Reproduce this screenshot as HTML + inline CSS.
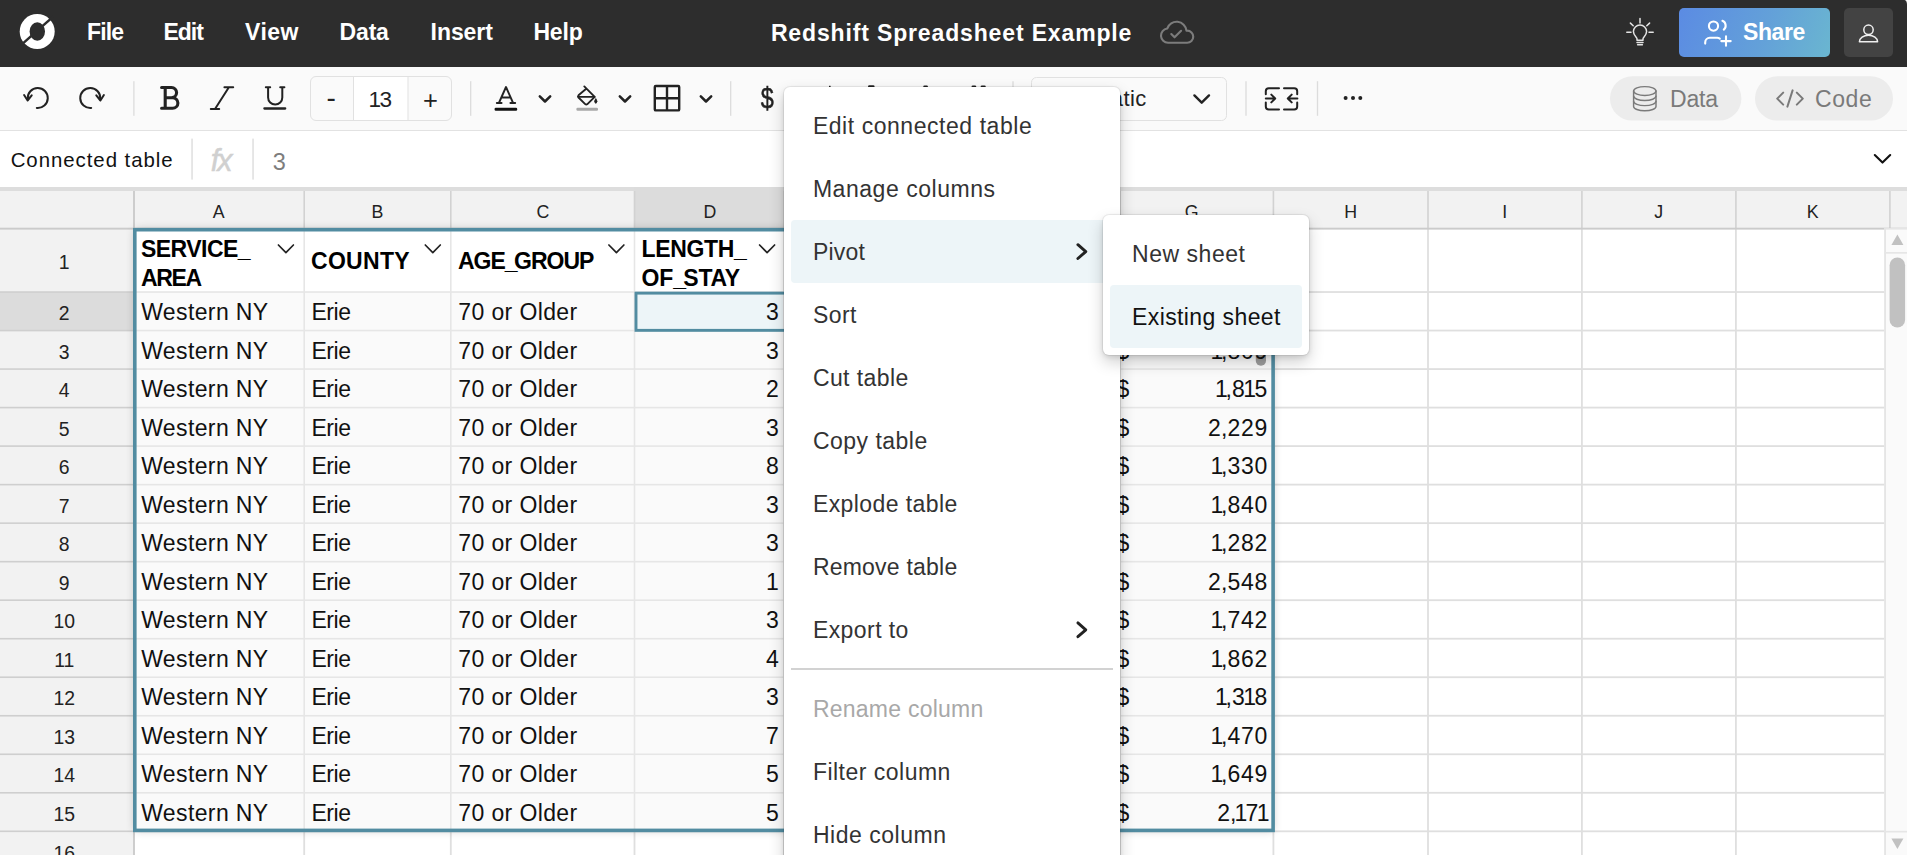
<!DOCTYPE html><html lang="en"><head><meta charset="utf-8"><title>Redshift Spreadsheet Example</title><style>
*{box-sizing:border-box;margin:0;padding:0}
html,body{width:1907px;height:855px;overflow:hidden;background:#fff}
body{font-family:"Liberation Sans",sans-serif;position:relative;-webkit-font-smoothing:antialiased}
.t{position:absolute;white-space:nowrap}
.abs{position:absolute}
svg{position:absolute;left:0;top:0;overflow:visible}
</style></head><body>
<div class="abs" style="left:0;top:0;width:1907px;height:67px;background:#2d2d2d"></div>
<svg width="1907" height="67" viewBox="0 0 1907 67">
<g>
<circle cx="37.2" cy="31.5" r="17.5" fill="#fff"/>
<ellipse cx="37.3" cy="31.5" rx="7.7" ry="9.3" fill="#2d2d2d"/>
<path d="M20.95 45.1 L53.45 16.4" stroke="#2d2d2d" stroke-width="2.5" fill="none"/>
</g>
</svg>
<div class="t" style="top:17px;font-size:23px;line-height:30px;color:#fff;letter-spacing:-0.874px;font-weight:700;left:87.00px;">File</div>
<div class="t" style="top:17px;font-size:23px;line-height:30px;color:#fff;letter-spacing:-0.980px;font-weight:700;left:163.40px;">Edit</div>
<div class="t" style="top:17px;font-size:23px;line-height:30px;color:#fff;letter-spacing:0.501px;font-weight:700;left:245.00px;">View</div>
<div class="t" style="top:17px;font-size:23px;line-height:30px;color:#fff;letter-spacing:-0.184px;font-weight:700;left:339.60px;">Data</div>
<div class="t" style="top:17px;font-size:23px;line-height:30px;color:#fff;letter-spacing:-0.067px;font-weight:700;left:430.60px;">Insert</div>
<div class="t" style="top:17px;font-size:23px;line-height:30px;color:#fff;letter-spacing:-0.147px;font-weight:700;left:533.40px;">Help</div>
<div class="t" style="top:18px;font-size:23px;line-height:30px;color:#fff;letter-spacing:0.854px;font-weight:700;left:770.90px;">Redshift Spreadsheet Example</div>
<svg width="1907" height="67" viewBox="0 0 1907 67"><g transform="translate(1158.8,15) scale(1.42)" fill="none" stroke="#7c7c7c" stroke-width="1.5" stroke-linecap="round" stroke-linejoin="round">
<path d="M6.5 19.5 a5 5 0 0 1 -0.6 -9.96 a7 7 0 0 1 13.6 1.46 h0.5 a4.25 4.25 0 0 1 0 8.5 Z"/>
<path d="M8.8 13.4 l2.3 2.3 l4.6 -4.6"/></g></svg>
<svg width="1907" height="67" viewBox="0 0 1907 67"><g fill="none" stroke="#e4e4e4" stroke-width="1.5" stroke-linecap="round" stroke-linejoin="round">
<path d="M1637 40.3 v-1.6 c0 -1.6 -3.6 -3.2 -3.6 -7.1 a6.6 6.6 0 0 1 13.2 0 c0 3.9 -3.6 5.5 -3.6 7.1 v1.6 z"/>
<path d="M1637 42.6 h6 M1637.6 44.8 h4.8"/>
<path d="M1640 18.6 v4.4 M1630.4 23.1 l2.8 2.7 M1649.6 23.1 l-2.8 2.7 M1626.8 32.3 h4.2 M1649 32.3 h4.2"/>
</g></svg>
<div class="abs" style="left:1679px;top:7.7px;width:151.2px;height:49.4px;border-radius:5px;background:linear-gradient(110deg,#5b8be3 0%,#63a0d9 55%,#6ab6d0 100%)"></div>
<svg width="1907" height="67" viewBox="0 0 1907 67"><g fill="none" stroke="#fff" stroke-width="2.1" stroke-linecap="round" stroke-linejoin="round">
<circle cx="1713.5" cy="26.1" r="4.6"/>
<path d="M1705.2 43.6 v-1.2 a4.6 4.6 0 0 1 4.6 -4.6 h7.4 a4.6 4.6 0 0 1 2.6 0.8"/>
<path d="M1722.4 20.8 a5.2 5.2 0 0 1 1.4 8.8"/>
<path d="M1726 36.4 v9.4 M1721.3 41.1 h9.4"/>
</g></svg>
<div class="t" style="top:17px;font-size:23px;line-height:30px;color:#fff;letter-spacing:-0.431px;font-weight:700;left:1743.00px;">Share</div>
<div class="abs" style="left:1843.9px;top:7.7px;width:49.2px;height:49.4px;border-radius:5px;background:#434343"></div>
<svg width="1907" height="67" viewBox="0 0 1907 67"><g fill="none" stroke="#f0f0f0" stroke-width="1.5" stroke-linecap="round" stroke-linejoin="round">
<circle cx="1868.5" cy="29.8" r="4.7"/><path d="M1859.4 41.8 a9.1 6.6 0 0 1 18.2 0 z"/></g></svg>
<svg width="1907" height="10" viewBox="0 0 1907 10"><path d="M1907 0 H1904.6 Q1907 0.8 1907 4.6 Z" fill="#f4f4f4"/></svg>
<div class="abs" style="left:0;top:67px;width:1907px;height:64px;background:#fafafa;border-bottom:1px solid #e2e2e2"></div>
<div class="abs" style="left:0;top:131px;width:1907px;height:56px;background:#fff"></div>
<svg width="1907" height="190" viewBox="0 0 1907 190">
<g fill="none" stroke="#222" stroke-width="2" stroke-linecap="round" stroke-linejoin="round" stroke-width="2.1"><path d="M27.8 98.8 A10 10 0 1 1 36.8 107.95"/><path d="M24.1 95 L27.6 100.5 L31.7 95.4"/></g>
<g fill="none" stroke="#222" stroke-width="2" stroke-linecap="round" stroke-linejoin="round" stroke-width="2.1" transform="translate(128,0) scale(-1,1)"><path d="M27.8 98.8 A10 10 0 1 1 36.8 107.95"/><path d="M24.1 95 L27.6 100.5 L31.7 95.4"/></g>
<rect x="133.25" y="81.2" width="1.3" height="34.6" fill="#dcdcdc"/>
<rect x="470.05" y="81.2" width="1.3" height="34.6" fill="#dcdcdc"/>
<rect x="730.0500000000001" y="81.2" width="1.3" height="34.6" fill="#dcdcdc"/>
<rect x="1012.35" y="81.2" width="1.3" height="34.6" fill="#dcdcdc"/>
<rect x="1245.35" y="81.2" width="1.3" height="34.6" fill="#dcdcdc"/>
<rect x="1316.85" y="81.2" width="1.3" height="34.6" fill="#dcdcdc"/>
<g fill="none" stroke="#222" stroke-width="3.1" stroke-linecap="round" stroke-linejoin="round"><path d="M161.6 87.5 H171.5 a5.1 5.1 0 0 1 0 10.2 H165.2 M165.2 97.7 H172.6 a5.3 5.3 0 0 1 0 10.6 H161.6 M165.2 87.5 V108.3"/></g>
<g fill="none" stroke="#222" stroke-width="2" stroke-linecap="round" stroke-linejoin="round" stroke-width="2.4"><path d="M224.4 87.2 H233.2 M210.8 109 H219.2 M228.9 87.2 L215 109"/></g>
<g fill="none" stroke="#222" stroke-width="2" stroke-linecap="round" stroke-linejoin="round" stroke-width="2.2"><path d="M265.8 87.2 H270.2 M280.2 87.2 H284.4 M268.1 87.2 V97.4 a7.1 7.1 0 0 0 14.2 0 V87.2"/><path d="M264.4 108.5 H285.2" stroke-width="2.3"/></g>
<rect x="310.5" y="76.5" width="141" height="44" rx="5.5" fill="#fafafa" stroke="#e1e1e1" stroke-width="1"/>
<rect x="353.5" y="77" width="54.5" height="43" fill="#fff"/>
<path d="M353.5 77 V120 M408 77 V120" stroke="#e1e1e1" stroke-width="1"/>
<g fill="none" stroke="#222" stroke-width="1.9" stroke-linecap="round" stroke-linejoin="round"><path d="M498.9 103 L506 87 L513.1 103 M501.4 97.5 H510.6 M496.8 103 H501.6 M510.4 103 H515.2"/></g>
<rect x="494.6" y="107.8" width="22.6" height="3" rx="1.2" fill="#111"/>
<path d="M539.8 96.3 L545 101.5 L550.2 96.3" fill="none" stroke="#222" stroke-width="2.5" stroke-linecap="round" stroke-linejoin="round"/>
<path d="M619.8 96.3 L625 101.5 L630.2 96.3" fill="none" stroke="#222" stroke-width="2.5" stroke-linecap="round" stroke-linejoin="round"/>
<path d="M700.8 96.3 L706 101.5 L711.2 96.3" fill="none" stroke="#222" stroke-width="2.5" stroke-linecap="round" stroke-linejoin="round"/>
<g fill="none" stroke="#222" stroke-width="1.9" stroke-linecap="round" stroke-linejoin="round"><path d="M584.3 86.4 L586.5 88.6 M586.5 88.6 L594.7 96.8 L587.4 104.1 a1.6 1.6 0 0 1 -2.2 0 L578.5 97.5 a1.6 1.6 0 0 1 0 -2.2 L586.5 88.6"/><path d="M578.6 96.9 H594.4"/></g>
<path d="M595.8 98.6 q2.6 3.4 0 4.8 q-2.6 -1.4 0 -4.8 z" fill="#222" stroke="#222" stroke-width="0.8"/>
<rect x="576.4" y="107.8" width="21.6" height="3" rx="1.2" fill="#a8a8a8"/>
<g fill="none" stroke="#222" stroke-width="2.4" stroke-linejoin="round"><rect x="654.8" y="86" width="24.4" height="24.4" rx="1"/><path d="M667 86 V110.4 M654.8 98.2 H679.2"/></g>
<g fill="#222"><rect x="829" y="85.8" width="1.6" height="2"/><rect x="868" y="85.3" width="6.6" height="3" rx="1.4"/><rect x="923.2" y="85.6" width="4.8" height="3" rx="1.4"/><rect x="971.5" y="85.6" width="4.8" height="3" rx="1.4"/><rect x="980.6" y="85.6" width="5.2" height="3" rx="1.4"/></g>
<rect x="1031.5" y="77.5" width="195" height="43" rx="5" fill="#fafafa" stroke="#e1e1e1" stroke-width="1"/>
<path d="M1194.4 95.4 L1201.7 102.7 L1209 95.4" fill="none" stroke="#222" stroke-width="2.4" stroke-linecap="round" stroke-linejoin="round"/>
<g fill="none" stroke="#222" stroke-width="2" stroke-linecap="round" stroke-linejoin="round" stroke-width="2.3"><path d="M1279 88.3 H1268.8 a3 3 0 0 0 -3 3 V94.3 M1265.8 102.6 V106.4 a3 3 0 0 0 3 3 H1279 M1284 88.3 H1294.2 a3 3 0 0 1 3 3 V94.3 M1297.2 102.6 V106.4 a3 3 0 0 1 -3 3 H1284"/><path d="M1265.8 98.5 H1275 M1271.3 94.6 L1275.2 98.5 L1271.3 102.4 M1297.4 98.5 H1288 M1291.7 94.6 L1287.8 98.5 L1291.7 102.4"/></g>
<circle cx="1345.6" cy="98" r="2" fill="#222"/>
<circle cx="1353" cy="98" r="2" fill="#222"/>
<circle cx="1360.3" cy="98" r="2" fill="#222"/>
<rect x="1610" y="76.2" width="131.4" height="44.4" rx="22.2" fill="#ececec"/>
<rect x="1755" y="76.2" width="138" height="44.4" rx="22.2" fill="#ececec"/>
<g fill="none" stroke="#7a7a7a" stroke-width="1.45" stroke-linecap="round" stroke-linejoin="round"><ellipse cx="1644.8" cy="91" rx="11.2" ry="4.4"/><path d="M1633.6 91 V106.4 a11.2 4.4 0 0 0 22.4 0 V91"/><path d="M1633.6 96.1 a11.2 4.4 0 0 0 22.4 0 M1633.6 101.2 a11.2 4.4 0 0 0 22.4 0"/></g>
<g fill="none" stroke="#7a7a7a" stroke-width="2" stroke-linecap="round" stroke-linejoin="round"><path d="M1783.2 92.6 L1777.2 98.6 L1783.2 104.6 M1796.8 92.6 L1802.8 98.6 L1796.8 104.6 M1792.6 90.4 L1787.4 106.6"/></g>
<rect x="191.4" y="138.6" width="1.3" height="41" fill="#dadada"/><rect x="252.4" y="138.6" width="1.3" height="41" fill="#dadada"/>
<path d="M1874.8 155 L1882.5 162.6 L1890.2 155" fill="none" stroke="#111" stroke-width="2.1" stroke-linecap="round" stroke-linejoin="round"/>
</svg>
<div class="t" style="top:80px;font-size:28px;line-height:35px;color:#222;left:326.60px;">-</div>
<div class="t" style="top:85px;font-size:22.6px;line-height:29px;color:#222;letter-spacing:-1.538px;left:368.60px;">13</div>
<div class="t" style="top:84px;font-size:25.5px;line-height:32px;color:#222;left:423.00px;">+</div>
<div class="t" style="top:81px;font-size:26px;line-height:34px;color:#222;left:759.60px;transform:scale(.9,1.15);transform-origin:50% 58%;-webkit-text-stroke:.45px #222;">$</div>
<div class="t" style="top:84px;font-size:22px;line-height:29px;color:#222;letter-spacing:0.400px;right:760.30px;">Automatic</div>
<div class="t" style="top:84px;font-size:23px;line-height:30px;color:#7a7a7a;letter-spacing:-0.194px;left:1670.00px;">Data</div>
<div class="t" style="top:84px;font-size:23px;line-height:30px;color:#7a7a7a;letter-spacing:0.572px;left:1815.00px;">Code</div>
<div class="t" style="top:147px;font-size:20.4px;line-height:26px;color:#111;letter-spacing:0.959px;left:10.70px;">Connected table</div>
<div class="t" style="top:141px;font-size:30.5px;line-height:38px;color:#d0d0d0;letter-spacing:-2.024px;font-style:italic;left:210.80px;-webkit-text-stroke:.5px #d0d0d0;">fx</div>
<div class="t" style="top:147px;font-size:23.5px;line-height:30px;color:#7d7d7d;left:272.70px;">3</div>
<svg width="1907" height="855" viewBox="0 0 1907 855">
<defs><filter id="bl" x="-5%" y="-5%" width="110%" height="110%"><feGaussianBlur stdDeviation="5"/></filter></defs>
<rect x="0" y="187" width="1907" height="4.2" fill="#dddddd"/>
<rect x="0" y="191" width="1907" height="38" fill="#f2f2f2"/>
<rect x="0" y="229" width="134" height="626" fill="#f2f2f2"/>
<rect x="634.5" y="187" width="150" height="42" fill="#dcdcdc"/>
<rect x="0" y="292.03" width="134" height="38.52" fill="#dcdcdc"/>
<rect x="303.30" y="229" width="1.8" height="626" fill="#dfdfdf"/>
<rect x="303.40" y="191" width="1.6" height="38" fill="#d2d2d2"/>
<rect x="449.90" y="229" width="1.8" height="626" fill="#dfdfdf"/>
<rect x="450.00" y="191" width="1.6" height="38" fill="#d2d2d2"/>
<rect x="633.60" y="229" width="1.8" height="626" fill="#dfdfdf"/>
<rect x="633.70" y="191" width="1.6" height="38" fill="#d2d2d2"/>
<rect x="783.10" y="229" width="1.8" height="626" fill="#dfdfdf"/>
<rect x="783.20" y="191" width="1.6" height="38" fill="#d2d2d2"/>
<rect x="935.10" y="229" width="1.8" height="626" fill="#dfdfdf"/>
<rect x="935.20" y="191" width="1.6" height="38" fill="#d2d2d2"/>
<rect x="1119.10" y="229" width="1.8" height="626" fill="#dfdfdf"/>
<rect x="1119.20" y="191" width="1.6" height="38" fill="#d2d2d2"/>
<rect x="1272.50" y="229" width="1.8" height="626" fill="#dfdfdf"/>
<rect x="1272.60" y="191" width="1.6" height="38" fill="#d2d2d2"/>
<rect x="1427.10" y="229" width="1.8" height="626" fill="#dfdfdf"/>
<rect x="1427.20" y="191" width="1.6" height="38" fill="#d2d2d2"/>
<rect x="1581.00" y="229" width="1.8" height="626" fill="#dfdfdf"/>
<rect x="1581.10" y="191" width="1.6" height="38" fill="#d2d2d2"/>
<rect x="1735.00" y="229" width="1.8" height="626" fill="#dfdfdf"/>
<rect x="1735.10" y="191" width="1.6" height="38" fill="#d2d2d2"/>
<rect x="1889.00" y="229" width="1.8" height="626" fill="#dfdfdf"/>
<rect x="1889.10" y="191" width="1.6" height="38" fill="#d2d2d2"/>
<rect x="134" y="291.13" width="1773" height="1.8" fill="#dfdfdf"/>
<rect x="0" y="291.23" width="134" height="1.6" fill="#cfcfcf"/>
<rect x="134" y="329.65" width="1773" height="1.8" fill="#dfdfdf"/>
<rect x="0" y="329.75" width="134" height="1.6" fill="#cfcfcf"/>
<rect x="134" y="368.17" width="1773" height="1.8" fill="#dfdfdf"/>
<rect x="0" y="368.27" width="134" height="1.6" fill="#cfcfcf"/>
<rect x="134" y="406.69" width="1773" height="1.8" fill="#dfdfdf"/>
<rect x="0" y="406.79" width="134" height="1.6" fill="#cfcfcf"/>
<rect x="134" y="445.21" width="1773" height="1.8" fill="#dfdfdf"/>
<rect x="0" y="445.31" width="134" height="1.6" fill="#cfcfcf"/>
<rect x="134" y="483.73" width="1773" height="1.8" fill="#dfdfdf"/>
<rect x="0" y="483.83" width="134" height="1.6" fill="#cfcfcf"/>
<rect x="134" y="522.25" width="1773" height="1.8" fill="#dfdfdf"/>
<rect x="0" y="522.35" width="134" height="1.6" fill="#cfcfcf"/>
<rect x="134" y="560.77" width="1773" height="1.8" fill="#dfdfdf"/>
<rect x="0" y="560.87" width="134" height="1.6" fill="#cfcfcf"/>
<rect x="134" y="599.29" width="1773" height="1.8" fill="#dfdfdf"/>
<rect x="0" y="599.39" width="134" height="1.6" fill="#cfcfcf"/>
<rect x="134" y="637.81" width="1773" height="1.8" fill="#dfdfdf"/>
<rect x="0" y="637.91" width="134" height="1.6" fill="#cfcfcf"/>
<rect x="134" y="676.33" width="1773" height="1.8" fill="#dfdfdf"/>
<rect x="0" y="676.43" width="134" height="1.6" fill="#cfcfcf"/>
<rect x="134" y="714.85" width="1773" height="1.8" fill="#dfdfdf"/>
<rect x="0" y="714.95" width="134" height="1.6" fill="#cfcfcf"/>
<rect x="134" y="753.37" width="1773" height="1.8" fill="#dfdfdf"/>
<rect x="0" y="753.47" width="134" height="1.6" fill="#cfcfcf"/>
<rect x="134" y="791.89" width="1773" height="1.8" fill="#dfdfdf"/>
<rect x="0" y="791.99" width="134" height="1.6" fill="#cfcfcf"/>
<rect x="134" y="830.41" width="1773" height="1.8" fill="#dfdfdf"/>
<rect x="0" y="830.51" width="134" height="1.6" fill="#cfcfcf"/>
<rect x="134" y="868.93" width="1773" height="1.8" fill="#dfdfdf"/>
<rect x="0" y="869.03" width="134" height="1.6" fill="#cfcfcf"/>
<rect x="0" y="227.7" width="1907" height="1.9" fill="#cbcbcb"/>
<rect x="133.1" y="191" width="1.8" height="664" fill="#c9c9c9"/>
<rect x="1884.2" y="228.4" width="22.8" height="627" fill="#fafafa"/>
<rect x="1884.2" y="228.4" width="1.7" height="627" fill="#e3e3e3"/>
<rect x="1884.2" y="228.2" width="22.8" height="1.4" fill="#e4e4e4"/>
<rect x="1884.2" y="252" width="22.8" height="1.7" fill="#e6e6e6"/><rect x="1884.2" y="830.8" width="22.8" height="1.7" fill="#e6e6e6"/>
<path d="M1891.4 245.1 L1897.4 234.6 L1903.4 245.1 Z" fill="#c1c1c1"/>
<path d="M1891.4 838.4 L1897.4 848.9 L1903.4 838.4 Z" fill="#c1c1c1"/>
<rect x="1889.6" y="257.4" width="15.5" height="70.2" rx="7.75" fill="#c1c1c1"/>
<rect x="134.8" y="229.7" width="1138.3" height="600.70" fill="#000" opacity="0.22" filter="url(#bl)"/>
<rect x="134.8" y="229.7" width="1138.3" height="62.33" fill="#fff"/>
<rect x="134.8" y="292.03" width="1138.3" height="538.37" fill="#fafafa"/>
<rect x="634.5" y="292.03" width="150" height="38.52" fill="#edf5f8"/>
<rect x="303.40" y="229.7" width="1.6" height="600.70" fill="#e6e6e6"/>
<rect x="450.00" y="229.7" width="1.6" height="600.70" fill="#e6e6e6"/>
<rect x="633.70" y="229.7" width="1.6" height="600.70" fill="#e6e6e6"/>
<rect x="783.20" y="229.7" width="1.6" height="600.70" fill="#e6e6e6"/>
<rect x="935.20" y="229.7" width="1.6" height="600.70" fill="#e6e6e6"/>
<rect x="1119.20" y="229.7" width="1.6" height="600.70" fill="#e6e6e6"/>
<rect x="134.8" y="291.23" width="1138.3" height="1.6" fill="#e6e6e6"/>
<rect x="134.8" y="329.75" width="1138.3" height="1.6" fill="#e6e6e6"/>
<rect x="134.8" y="368.27" width="1138.3" height="1.6" fill="#e6e6e6"/>
<rect x="134.8" y="406.79" width="1138.3" height="1.6" fill="#e6e6e6"/>
<rect x="134.8" y="445.31" width="1138.3" height="1.6" fill="#e6e6e6"/>
<rect x="134.8" y="483.83" width="1138.3" height="1.6" fill="#e6e6e6"/>
<rect x="134.8" y="522.35" width="1138.3" height="1.6" fill="#e6e6e6"/>
<rect x="134.8" y="560.87" width="1138.3" height="1.6" fill="#e6e6e6"/>
<rect x="134.8" y="599.39" width="1138.3" height="1.6" fill="#e6e6e6"/>
<rect x="134.8" y="637.91" width="1138.3" height="1.6" fill="#e6e6e6"/>
<rect x="134.8" y="676.43" width="1138.3" height="1.6" fill="#e6e6e6"/>
<rect x="134.8" y="714.95" width="1138.3" height="1.6" fill="#e6e6e6"/>
<rect x="134.8" y="753.47" width="1138.3" height="1.6" fill="#e6e6e6"/>
<rect x="134.8" y="791.99" width="1138.3" height="1.6" fill="#e6e6e6"/>
<rect x="134.8" y="229.7" width="1138.3" height="600.70" fill="none" stroke="#528ca1" stroke-width="3.6"/>
<rect x="636" y="293.13" width="150" height="37.22" fill="none" stroke="#528ca1" stroke-width="2.9"/>
<path d="M278.4 245 L285.9 252.6 L293.4 245" fill="none" stroke="#222" stroke-width="1.7" stroke-linecap="round" stroke-linejoin="round"/>
<path d="M425.3 245 L432.8 252.6 L440.3 245" fill="none" stroke="#222" stroke-width="1.7" stroke-linecap="round" stroke-linejoin="round"/>
<path d="M608.9 245 L616.4 252.6 L623.9 245" fill="none" stroke="#222" stroke-width="1.7" stroke-linecap="round" stroke-linejoin="round"/>
<path d="M759.6 245 L767.1 252.6 L774.6 245" fill="none" stroke="#222" stroke-width="1.7" stroke-linecap="round" stroke-linejoin="round"/>
<rect x="1255.8" y="350" width="10.2" height="15.8" rx="5" fill="#9c9c9c"/>
</svg>
<div class="t" style="top:200px;font-size:17.8px;line-height:24px;color:#222;left:212.66px;">A</div>
<div class="t" style="top:200px;font-size:17.8px;line-height:24px;color:#222;left:371.46px;">B</div>
<div class="t" style="top:200px;font-size:17.8px;line-height:24px;color:#222;left:536.57px;">C</div>
<div class="t" style="top:200px;font-size:17.8px;line-height:24px;color:#222;left:703.57px;">D</div>
<div class="t" style="top:200px;font-size:17.8px;line-height:24px;color:#222;left:1184.68px;">G</div>
<div class="t" style="top:200px;font-size:17.8px;line-height:24px;color:#222;left:1344.17px;">H</div>
<div class="t" style="top:200px;font-size:17.8px;line-height:24px;color:#222;left:1502.33px;">I</div>
<div class="t" style="top:200px;font-size:17.8px;line-height:24px;color:#222;left:1654.35px;">J</div>
<div class="t" style="top:200px;font-size:17.8px;line-height:24px;color:#222;left:1806.86px;">K</div>
<div class="t" style="top:249px;font-size:19.4px;line-height:26px;color:#222;left:58.81px;">1</div>
<div class="t" style="top:300px;font-size:19.4px;line-height:26px;color:#222;left:58.81px;">2</div>
<div class="t" style="top:339px;font-size:19.4px;line-height:26px;color:#222;left:58.81px;">3</div>
<div class="t" style="top:377px;font-size:19.4px;line-height:26px;color:#222;left:58.81px;">4</div>
<div class="t" style="top:416px;font-size:19.4px;line-height:26px;color:#222;left:58.81px;">5</div>
<div class="t" style="top:454px;font-size:19.4px;line-height:26px;color:#222;left:58.81px;">6</div>
<div class="t" style="top:493px;font-size:19.4px;line-height:26px;color:#222;left:58.81px;">7</div>
<div class="t" style="top:531px;font-size:19.4px;line-height:26px;color:#222;left:58.81px;">8</div>
<div class="t" style="top:570px;font-size:19.4px;line-height:26px;color:#222;left:58.81px;">9</div>
<div class="t" style="top:608px;font-size:19.4px;line-height:26px;color:#222;left:53.41px;">10</div>
<div class="t" style="top:647px;font-size:19.4px;line-height:26px;color:#222;left:54.13px;">11</div>
<div class="t" style="top:685px;font-size:19.4px;line-height:26px;color:#222;left:53.41px;">12</div>
<div class="t" style="top:724px;font-size:19.4px;line-height:26px;color:#222;left:53.41px;">13</div>
<div class="t" style="top:762px;font-size:19.4px;line-height:26px;color:#222;left:53.41px;">14</div>
<div class="t" style="top:801px;font-size:19.4px;line-height:26px;color:#222;left:53.41px;">15</div>
<div class="t" style="top:840px;font-size:19.4px;line-height:26px;color:#222;left:53.41px;">16</div>
<div class="t" style="top:234px;font-size:23px;line-height:30px;color:#000;letter-spacing:-0.536px;font-weight:700;left:141.00px;">SERVICE<span style="margin-right:-2.6px">_</span></div>
<div class="t" style="top:263px;font-size:23px;line-height:30px;color:#000;letter-spacing:-1.324px;font-weight:700;left:141.00px;">AREA</div>
<div class="t" style="top:246px;font-size:23px;line-height:30px;color:#000;letter-spacing:0.298px;font-weight:700;left:311.00px;">COUNTY</div>
<div class="t" style="top:246px;font-size:23px;line-height:30px;color:#000;letter-spacing:-0.997px;font-weight:700;left:458.00px;">AGE<span style="margin-right:-2.6px">_</span>GROUP</div>
<div class="t" style="top:234px;font-size:23px;line-height:30px;color:#000;letter-spacing:-0.340px;font-weight:700;left:641.60px;">LENGTH<span style="margin-right:-2.6px">_</span></div>
<div class="t" style="top:263px;font-size:23px;line-height:30px;color:#000;letter-spacing:-0.176px;font-weight:700;left:641.60px;">OF<span style="margin-right:-2.6px">_</span>STAY</div>
<div class="t" style="top:297px;font-size:23px;line-height:30px;color:#111;letter-spacing:0.382px;left:141.20px;">Western NY</div>
<div class="t" style="top:297px;font-size:23px;line-height:30px;color:#111;letter-spacing:-0.467px;left:311.50px;">Erie</div>
<div class="t" style="top:297px;font-size:23px;line-height:30px;color:#111;letter-spacing:0.384px;left:458.30px;">70 or Older</div>
<div class="t" style="top:297px;font-size:23px;line-height:30px;color:#111;right:1128.20px;">3</div>
<div class="t" style="top:297px;font-size:23px;line-height:30px;color:#111;left:1116.60px;">$</div>
<div class="t" style="top:297px;font-size:23px;line-height:30px;color:#111;right:639.40px;"><span style="margin:0 -1.95px">1</span><span style="margin:0 -0.20px">,</span><span style="margin:0 0.33px">8</span><span style="margin:0 0.33px">0</span><span style="margin:0 0.33px">3</span></div>
<div class="t" style="top:336px;font-size:23px;line-height:30px;color:#111;letter-spacing:0.382px;left:141.20px;">Western NY</div>
<div class="t" style="top:336px;font-size:23px;line-height:30px;color:#111;letter-spacing:-0.467px;left:311.50px;">Erie</div>
<div class="t" style="top:336px;font-size:23px;line-height:30px;color:#111;letter-spacing:0.384px;left:458.30px;">70 or Older</div>
<div class="t" style="top:336px;font-size:23px;line-height:30px;color:#111;right:1128.20px;">3</div>
<div class="t" style="top:336px;font-size:23px;line-height:30px;color:#111;left:1116.60px;">$</div>
<div class="t" style="top:336px;font-size:23px;line-height:30px;color:#111;right:639.40px;"><span style="margin:0 -1.95px">1</span><span style="margin:0 -0.20px">,</span><span style="margin:0 0.33px">8</span><span style="margin:0 0.33px">0</span><span style="margin:0 0.33px">9</span></div>
<div class="t" style="top:374px;font-size:23px;line-height:30px;color:#111;letter-spacing:0.382px;left:141.20px;">Western NY</div>
<div class="t" style="top:374px;font-size:23px;line-height:30px;color:#111;letter-spacing:-0.467px;left:311.50px;">Erie</div>
<div class="t" style="top:374px;font-size:23px;line-height:30px;color:#111;letter-spacing:0.384px;left:458.30px;">70 or Older</div>
<div class="t" style="top:374px;font-size:23px;line-height:30px;color:#111;right:1128.20px;">2</div>
<div class="t" style="top:374px;font-size:23px;line-height:30px;color:#111;left:1116.60px;">$</div>
<div class="t" style="top:374px;font-size:23px;line-height:30px;color:#111;right:639.40px;"><span style="margin:0 -1.95px">1</span><span style="margin:0 -0.20px">,</span><span style="margin:0 0.33px">8</span><span style="margin:0 -1.95px">1</span><span style="margin:0 0.33px">5</span></div>
<div class="t" style="top:413px;font-size:23px;line-height:30px;color:#111;letter-spacing:0.382px;left:141.20px;">Western NY</div>
<div class="t" style="top:413px;font-size:23px;line-height:30px;color:#111;letter-spacing:-0.467px;left:311.50px;">Erie</div>
<div class="t" style="top:413px;font-size:23px;line-height:30px;color:#111;letter-spacing:0.384px;left:458.30px;">70 or Older</div>
<div class="t" style="top:413px;font-size:23px;line-height:30px;color:#111;right:1128.20px;">3</div>
<div class="t" style="top:413px;font-size:23px;line-height:30px;color:#111;left:1116.60px;">$</div>
<div class="t" style="top:413px;font-size:23px;line-height:30px;color:#111;right:639.40px;"><span style="margin:0 0.33px">2</span><span style="margin:0 -0.20px">,</span><span style="margin:0 0.33px">2</span><span style="margin:0 0.33px">2</span><span style="margin:0 0.33px">9</span></div>
<div class="t" style="top:451px;font-size:23px;line-height:30px;color:#111;letter-spacing:0.382px;left:141.20px;">Western NY</div>
<div class="t" style="top:451px;font-size:23px;line-height:30px;color:#111;letter-spacing:-0.467px;left:311.50px;">Erie</div>
<div class="t" style="top:451px;font-size:23px;line-height:30px;color:#111;letter-spacing:0.384px;left:458.30px;">70 or Older</div>
<div class="t" style="top:451px;font-size:23px;line-height:30px;color:#111;right:1128.20px;">8</div>
<div class="t" style="top:451px;font-size:23px;line-height:30px;color:#111;left:1116.60px;">$</div>
<div class="t" style="top:451px;font-size:23px;line-height:30px;color:#111;right:639.40px;"><span style="margin:0 -1.95px">1</span><span style="margin:0 -0.20px">,</span><span style="margin:0 0.33px">3</span><span style="margin:0 0.33px">3</span><span style="margin:0 0.33px">0</span></div>
<div class="t" style="top:490px;font-size:23px;line-height:30px;color:#111;letter-spacing:0.382px;left:141.20px;">Western NY</div>
<div class="t" style="top:490px;font-size:23px;line-height:30px;color:#111;letter-spacing:-0.467px;left:311.50px;">Erie</div>
<div class="t" style="top:490px;font-size:23px;line-height:30px;color:#111;letter-spacing:0.384px;left:458.30px;">70 or Older</div>
<div class="t" style="top:490px;font-size:23px;line-height:30px;color:#111;right:1128.20px;">3</div>
<div class="t" style="top:490px;font-size:23px;line-height:30px;color:#111;left:1116.60px;">$</div>
<div class="t" style="top:490px;font-size:23px;line-height:30px;color:#111;right:639.40px;"><span style="margin:0 -1.95px">1</span><span style="margin:0 -0.20px">,</span><span style="margin:0 0.33px">8</span><span style="margin:0 0.33px">4</span><span style="margin:0 0.33px">0</span></div>
<div class="t" style="top:528px;font-size:23px;line-height:30px;color:#111;letter-spacing:0.382px;left:141.20px;">Western NY</div>
<div class="t" style="top:528px;font-size:23px;line-height:30px;color:#111;letter-spacing:-0.467px;left:311.50px;">Erie</div>
<div class="t" style="top:528px;font-size:23px;line-height:30px;color:#111;letter-spacing:0.384px;left:458.30px;">70 or Older</div>
<div class="t" style="top:528px;font-size:23px;line-height:30px;color:#111;right:1128.20px;">3</div>
<div class="t" style="top:528px;font-size:23px;line-height:30px;color:#111;left:1116.60px;">$</div>
<div class="t" style="top:528px;font-size:23px;line-height:30px;color:#111;right:639.40px;"><span style="margin:0 -1.95px">1</span><span style="margin:0 -0.20px">,</span><span style="margin:0 0.33px">2</span><span style="margin:0 0.33px">8</span><span style="margin:0 0.33px">2</span></div>
<div class="t" style="top:567px;font-size:23px;line-height:30px;color:#111;letter-spacing:0.382px;left:141.20px;">Western NY</div>
<div class="t" style="top:567px;font-size:23px;line-height:30px;color:#111;letter-spacing:-0.467px;left:311.50px;">Erie</div>
<div class="t" style="top:567px;font-size:23px;line-height:30px;color:#111;letter-spacing:0.384px;left:458.30px;">70 or Older</div>
<div class="t" style="top:567px;font-size:23px;line-height:30px;color:#111;right:1128.20px;">1</div>
<div class="t" style="top:567px;font-size:23px;line-height:30px;color:#111;left:1116.60px;">$</div>
<div class="t" style="top:567px;font-size:23px;line-height:30px;color:#111;right:639.40px;"><span style="margin:0 0.33px">2</span><span style="margin:0 -0.20px">,</span><span style="margin:0 0.33px">5</span><span style="margin:0 0.33px">4</span><span style="margin:0 0.33px">8</span></div>
<div class="t" style="top:605px;font-size:23px;line-height:30px;color:#111;letter-spacing:0.382px;left:141.20px;">Western NY</div>
<div class="t" style="top:605px;font-size:23px;line-height:30px;color:#111;letter-spacing:-0.467px;left:311.50px;">Erie</div>
<div class="t" style="top:605px;font-size:23px;line-height:30px;color:#111;letter-spacing:0.384px;left:458.30px;">70 or Older</div>
<div class="t" style="top:605px;font-size:23px;line-height:30px;color:#111;right:1128.20px;">3</div>
<div class="t" style="top:605px;font-size:23px;line-height:30px;color:#111;left:1116.60px;">$</div>
<div class="t" style="top:605px;font-size:23px;line-height:30px;color:#111;right:639.40px;"><span style="margin:0 -1.95px">1</span><span style="margin:0 -0.20px">,</span><span style="margin:0 0.33px">7</span><span style="margin:0 0.33px">4</span><span style="margin:0 0.33px">2</span></div>
<div class="t" style="top:644px;font-size:23px;line-height:30px;color:#111;letter-spacing:0.382px;left:141.20px;">Western NY</div>
<div class="t" style="top:644px;font-size:23px;line-height:30px;color:#111;letter-spacing:-0.467px;left:311.50px;">Erie</div>
<div class="t" style="top:644px;font-size:23px;line-height:30px;color:#111;letter-spacing:0.384px;left:458.30px;">70 or Older</div>
<div class="t" style="top:644px;font-size:23px;line-height:30px;color:#111;right:1128.20px;">4</div>
<div class="t" style="top:644px;font-size:23px;line-height:30px;color:#111;left:1116.60px;">$</div>
<div class="t" style="top:644px;font-size:23px;line-height:30px;color:#111;right:639.40px;"><span style="margin:0 -1.95px">1</span><span style="margin:0 -0.20px">,</span><span style="margin:0 0.33px">8</span><span style="margin:0 0.33px">6</span><span style="margin:0 0.33px">2</span></div>
<div class="t" style="top:682px;font-size:23px;line-height:30px;color:#111;letter-spacing:0.382px;left:141.20px;">Western NY</div>
<div class="t" style="top:682px;font-size:23px;line-height:30px;color:#111;letter-spacing:-0.467px;left:311.50px;">Erie</div>
<div class="t" style="top:682px;font-size:23px;line-height:30px;color:#111;letter-spacing:0.384px;left:458.30px;">70 or Older</div>
<div class="t" style="top:682px;font-size:23px;line-height:30px;color:#111;right:1128.20px;">3</div>
<div class="t" style="top:682px;font-size:23px;line-height:30px;color:#111;left:1116.60px;">$</div>
<div class="t" style="top:682px;font-size:23px;line-height:30px;color:#111;right:639.40px;"><span style="margin:0 -1.95px">1</span><span style="margin:0 -0.20px">,</span><span style="margin:0 0.33px">3</span><span style="margin:0 -1.95px">1</span><span style="margin:0 0.33px">8</span></div>
<div class="t" style="top:721px;font-size:23px;line-height:30px;color:#111;letter-spacing:0.382px;left:141.20px;">Western NY</div>
<div class="t" style="top:721px;font-size:23px;line-height:30px;color:#111;letter-spacing:-0.467px;left:311.50px;">Erie</div>
<div class="t" style="top:721px;font-size:23px;line-height:30px;color:#111;letter-spacing:0.384px;left:458.30px;">70 or Older</div>
<div class="t" style="top:721px;font-size:23px;line-height:30px;color:#111;right:1128.20px;">7</div>
<div class="t" style="top:721px;font-size:23px;line-height:30px;color:#111;left:1116.60px;">$</div>
<div class="t" style="top:721px;font-size:23px;line-height:30px;color:#111;right:639.40px;"><span style="margin:0 -1.95px">1</span><span style="margin:0 -0.20px">,</span><span style="margin:0 0.33px">4</span><span style="margin:0 0.33px">7</span><span style="margin:0 0.33px">0</span></div>
<div class="t" style="top:759px;font-size:23px;line-height:30px;color:#111;letter-spacing:0.382px;left:141.20px;">Western NY</div>
<div class="t" style="top:759px;font-size:23px;line-height:30px;color:#111;letter-spacing:-0.467px;left:311.50px;">Erie</div>
<div class="t" style="top:759px;font-size:23px;line-height:30px;color:#111;letter-spacing:0.384px;left:458.30px;">70 or Older</div>
<div class="t" style="top:759px;font-size:23px;line-height:30px;color:#111;right:1128.20px;">5</div>
<div class="t" style="top:759px;font-size:23px;line-height:30px;color:#111;left:1116.60px;">$</div>
<div class="t" style="top:759px;font-size:23px;line-height:30px;color:#111;right:639.40px;"><span style="margin:0 -1.95px">1</span><span style="margin:0 -0.20px">,</span><span style="margin:0 0.33px">6</span><span style="margin:0 0.33px">4</span><span style="margin:0 0.33px">9</span></div>
<div class="t" style="top:798px;font-size:23px;line-height:30px;color:#111;letter-spacing:0.382px;left:141.20px;">Western NY</div>
<div class="t" style="top:798px;font-size:23px;line-height:30px;color:#111;letter-spacing:-0.467px;left:311.50px;">Erie</div>
<div class="t" style="top:798px;font-size:23px;line-height:30px;color:#111;letter-spacing:0.384px;left:458.30px;">70 or Older</div>
<div class="t" style="top:798px;font-size:23px;line-height:30px;color:#111;right:1128.20px;">5</div>
<div class="t" style="top:798px;font-size:23px;line-height:30px;color:#111;left:1116.60px;">$</div>
<div class="t" style="top:798px;font-size:23px;line-height:30px;color:#111;right:639.40px;"><span style="margin:0 0.33px">2</span><span style="margin:0 -0.20px">,</span><span style="margin:0 -1.95px">1</span><span style="margin:0 0.33px">7</span><span style="margin:0 -1.95px">1</span></div>
<div class="abs" style="left:784px;top:87px;width:336.3px;height:790px;background:#fff;border-radius:6px;box-shadow:0 0 0 1px rgba(0,0,0,0.06),0 7px 16px rgba(0,0,0,0.19),0 2px 5px rgba(0,0,0,0.10)"></div>
<div class="abs" style="left:790.8px;top:220.2px;width:322.6px;height:62.6px;background:#edf5f8;border-radius:4px"></div>
<div class="abs" style="left:791px;top:668.4px;width:321.7px;height:1.4px;background:#d2d2d2"></div>
<div class="t" style="top:111px;font-size:23px;line-height:30px;color:#333;letter-spacing:0.546px;left:812.90px;">Edit connected table</div>
<div class="t" style="top:174px;font-size:23px;line-height:30px;color:#333;letter-spacing:0.542px;left:812.90px;">Manage columns</div>
<div class="t" style="top:237px;font-size:23px;line-height:30px;color:#333;letter-spacing:0.242px;left:812.90px;">Pivot</div>
<div class="t" style="top:300px;font-size:23px;line-height:30px;color:#333;letter-spacing:0.439px;left:812.90px;">Sort</div>
<div class="t" style="top:363px;font-size:23px;line-height:30px;color:#333;letter-spacing:0.405px;left:812.90px;">Cut table</div>
<div class="t" style="top:426px;font-size:23px;line-height:30px;color:#333;letter-spacing:0.482px;left:812.90px;">Copy table</div>
<div class="t" style="top:489px;font-size:23px;line-height:30px;color:#333;letter-spacing:0.410px;left:812.90px;">Explode table</div>
<div class="t" style="top:552px;font-size:23px;line-height:30px;color:#333;letter-spacing:0.217px;left:812.90px;">Remove table</div>
<div class="t" style="top:615px;font-size:23px;line-height:30px;color:#333;letter-spacing:0.432px;left:812.90px;">Export to</div>
<div class="t" style="top:694px;font-size:23px;line-height:30px;color:#a8a8a8;letter-spacing:0.244px;left:812.90px;">Rename column</div>
<div class="t" style="top:757px;font-size:23px;line-height:30px;color:#333;letter-spacing:0.488px;left:812.90px;">Filter column</div>
<div class="t" style="top:820px;font-size:23px;line-height:30px;color:#333;letter-spacing:0.526px;left:812.90px;">Hide column</div>
<svg width="1907" height="855" viewBox="0 0 1907 855">
<path d="M1077.9 244.7 L1085.8 251.6 L1077.9 258.5" fill="none" stroke="#222" stroke-width="2.9" stroke-linecap="round" stroke-linejoin="round"/>
<path d="M1077.9 622.9 L1085.8 629.8 L1077.9 636.7" fill="none" stroke="#222" stroke-width="2.9" stroke-linecap="round" stroke-linejoin="round"/>
</svg>
<div class="abs" style="left:1103px;top:214.6px;width:206px;height:140.4px;background:#fff;border-radius:6px;box-shadow:0 0 0 1px rgba(0,0,0,0.06),0 7px 16px rgba(0,0,0,0.19),0 2px 5px rgba(0,0,0,0.10)"></div>
<div class="abs" style="left:1110.2px;top:285.1px;width:191.7px;height:62.6px;background:#edf5f8;border-radius:4px"></div>
<div class="t" style="top:239px;font-size:23px;line-height:30px;color:#333;letter-spacing:0.542px;left:1132.00px;">New sheet</div>
<div class="t" style="top:302px;font-size:23px;line-height:30px;color:#111;letter-spacing:0.401px;left:1132.00px;">Existing sheet</div>
</body></html>
